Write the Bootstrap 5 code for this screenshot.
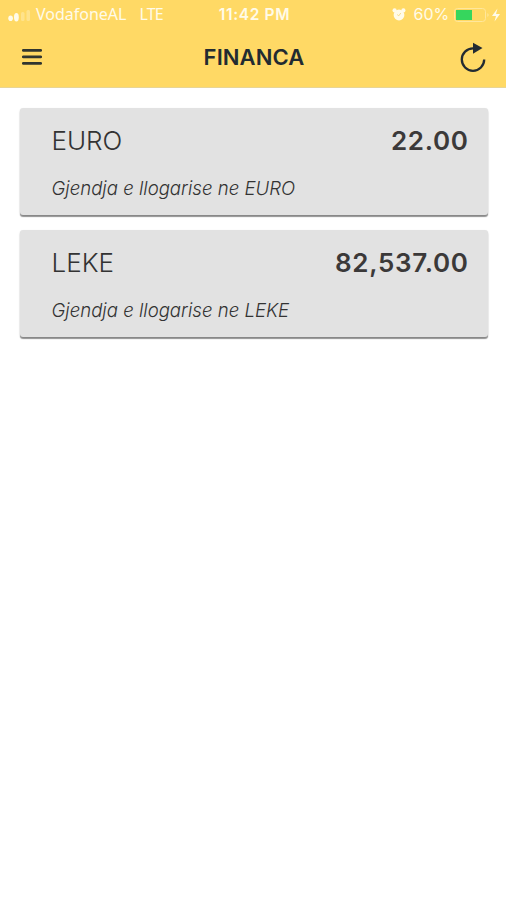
<!DOCTYPE html>
<html lang="sq">
<head>
<meta charset="utf-8">
<meta name="viewport" content="width=device-width, initial-scale=1">
<title>Financa</title>
<link href="https://cdn.jsdelivr.net/npm/bootstrap@5.3.0/dist/css/bootstrap.min.css" rel="stylesheet">
<style>
body { font-family: Inter, "Liberation Sans", sans-serif; background: #fff; color: #333; min-height: 100vh; }
.app-header { background: #ffd965; height: 88px; border-bottom: 1px solid #e8d596; }
.status-bar { height: 29px; color: #fffbe9; font-size: 16px; line-height: 29px; display: grid; grid-template-columns: 1fr auto 1fr; padding: 0 5px 0 8px; }
.carrier { font-family: "Noto Sans", sans-serif; letter-spacing: 0; margin-left: 6px; }
.network { font-family: "Noto Sans", sans-serif; letter-spacing: -.8px; margin-left: 13px; }
.clock { font-size: 15.5px; font-weight: 600; letter-spacing: .65px; }
.battery-level { font-size: 16px; letter-spacing: -.1px; }
.title-bar { height: 58px; display: grid; grid-template-columns: 1fr auto 1fr; padding: 0 20px 2px 22px; color: #222b31; }
.page-title { font-size: 22px; font-weight: 600; line-height: 56px; letter-spacing: .1px; }
.tool { color: inherit; line-height: 0; }
.account { background: #e2e2e2; height: 107px; border-radius: 3px; padding: 15px 20px 0 31.5px; box-shadow: 0 2px 1px rgba(0,0,0,.4), 0 1px 2px rgba(0,0,0,.15); }
.currency { font-size: 26px; font-weight: 300; line-height: 36px; }
.amount { font-size: 26px; font-weight: 600; line-height: 36px; color: #3b3939; letter-spacing: .7px; margin-right: -.7px; }
.note { font-size: 18.6px; font-weight: 300; font-style: italic; line-height: 26px; margin-top: 16px; }
.account-list { padding: 20px 18px 20px 20px; gap: 14.5px; }
</style>
</head>
<body>
<header class="app-header">
  <div class="status-bar">
    <div class="d-flex align-items-center">
      <svg width="22" height="14" viewBox="0 0 22 14" fill="#fffbe9" aria-hidden="true"><ellipse cx="2.6" cy="10.3" rx="2.3" ry="2.8"/><ellipse cx="8.4" cy="9.2" rx="2.4" ry="4.2"/><rect x="13" y="4" width="3.5" height="9" rx="1.5" opacity=".3"/><rect x="18.5" y="2" width="3.5" height="11" rx="1.5" opacity=".3"/></svg>
      <span class="carrier">VodafoneAL</span><span class="network">LTE</span>
    </div>
    <div class="clock">11:42 PM</div>
    <div class="d-flex align-items-center justify-content-end">
      <svg class="me-2" width="14" height="13" viewBox="0 0 14 13" aria-hidden="true"><g fill="#fffbe9"><circle cx="7" cy="7" r="5.4"/><circle cx="2.6" cy="2.4" r="2.1"/><circle cx="11.4" cy="2.4" r="2.1"/></g><path d="M5.2 6.6 6.8 7.8 8.8 5" fill="none" stroke="#f6dc8c" stroke-width="1"/></svg>
      <span class="battery-level">60%</span>
      <svg class="ms-1" width="48" height="16" viewBox="0 0 48 16" aria-hidden="true"><rect x="1.5" y="1.5" width="31" height="13" rx="3" fill="none" stroke="#ffe79c"/><rect x="3" y="3" width="16" height="10" fill="#36d65d"/><path d="M34.5 6q2 2 0 4z" fill="#ffebad"/><path d="M44.5 1.5 39 9h4l-1.5 5.5L47 7h-4z" fill="#fffbe9"/></svg>
    </div>
  </div>
  <div class="title-bar">
    <div class="d-flex align-items-center"><button class="btn p-0 border-0 tool" type="button" aria-label="Menu"><svg width="20" height="18" viewBox="0 0 20 18"><path d="M1.3 2.3h17.4M1.3 8.8h17.4M1.3 15.3h17.4" stroke="#30352f" stroke-width="2.8" stroke-linecap="round"/></svg></button></div>
    <div class="page-title">FINANCA</div>
    <div class="d-flex align-items-center justify-content-end"><button class="btn p-0 border-0 tool" type="button" aria-label="Refresh"><svg width="26" height="30" viewBox="0 0 26 30"><path d="M15 6.4H13A11.2 11.2 0 1 0 24.2 17.6" fill="none" stroke="#232b32" stroke-width="2.3"/><path d="M13 .8 22.5 6 13 11.8z" fill="#232b32"/></svg></button></div>
  </div>
</header>
<main class="account-list d-flex flex-column">
  <section class="account">
    <div class="d-flex justify-content-between"><span class="currency">EURO</span><span class="amount">22.00</span></div>
    <div class="note">Gjendja e llogarise ne EURO</div>
  </section>
  <section class="account">
    <div class="d-flex justify-content-between"><span class="currency">LEKE</span><span class="amount">82,537.00</span></div>
    <div class="note">Gjendja e llogarise ne LEKE</div>
  </section>
</main>
<script src="https://cdn.jsdelivr.net/npm/bootstrap@5.3.0/dist/js/bootstrap.bundle.min.js"></script>
</body>
</html>
